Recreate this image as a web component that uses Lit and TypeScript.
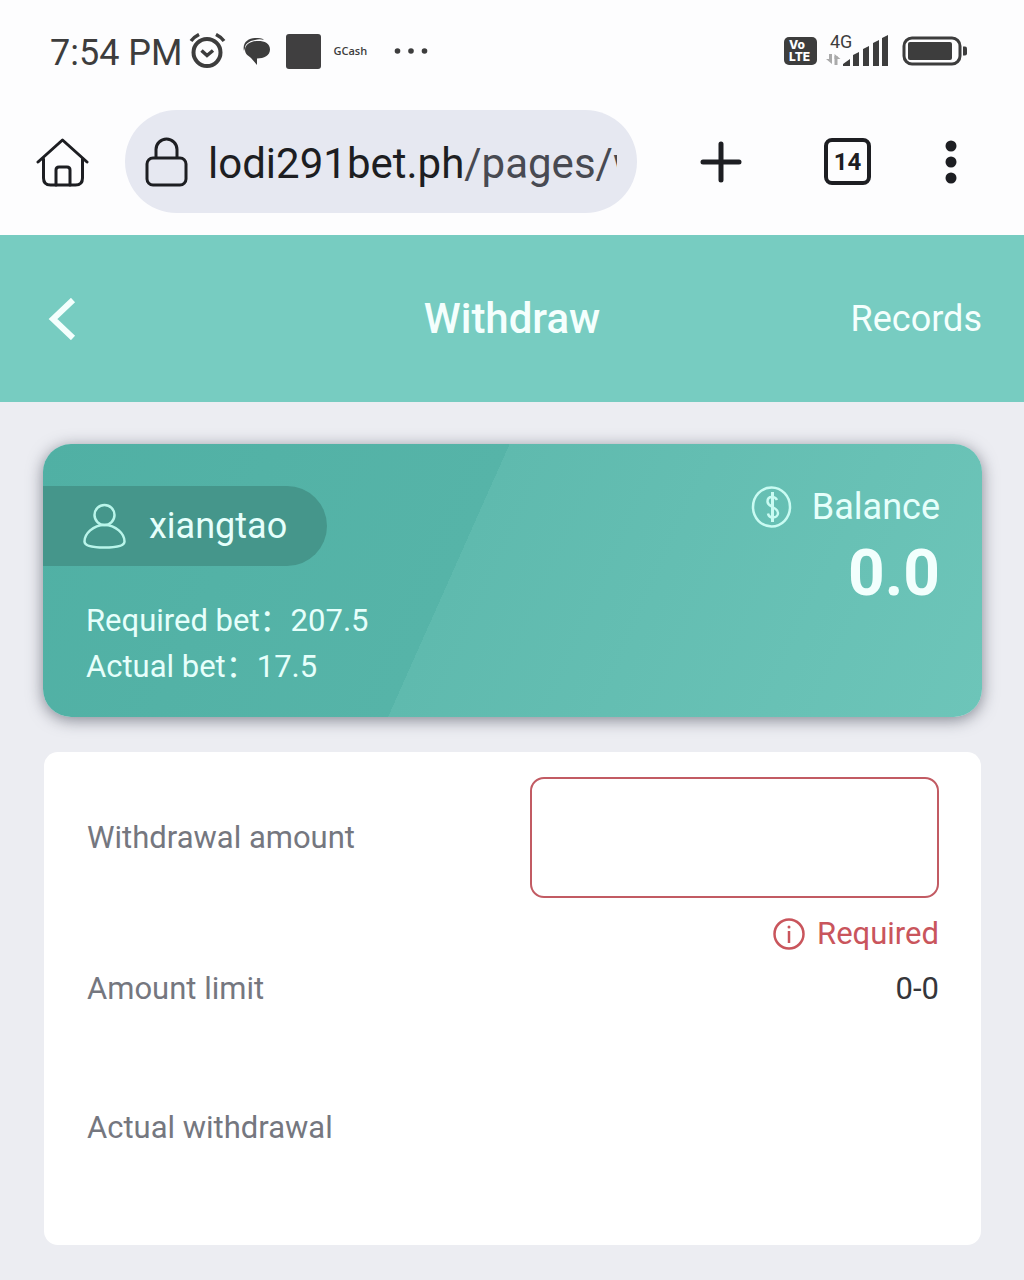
import { LitElement, html, css } from 'lit';
import { customElement, property } from 'lit/decorators.js';

@customElement('status-bar')
export class StatusBar extends LitElement {
  @property() time = '';

  static styles = css`
    :host {
      display: flex;
      align-items: center;
      justify-content: space-between;
      padding: 30px 56px 0 50px;
      color: #3d3d3d;
    }

    .group {
      display: flex;
      align-items: center;
      height: 42px;
    }

    .time {
      padding-top: 3px;
      font-size: 36px;
      line-height: 42px;
      margin-right: 6px;
      white-space: nowrap;
    }

    svg {
      display: block;
      flex: none;
    }

    .chat {
      margin-left: 17px;
    }

    .square {
      width: 35px;
      height: 35px;
      margin-left: 16px;
      border-radius: 3px;
      background: #403f40;
    }

    .app {
      margin-left: 13px;
      font: 600 11px/16px 'Open Sans', sans-serif;
    }

    .more {
      margin-left: 27px;
    }

    .volte {
      display: flex;
      flex-direction: column;
      justify-content: center;
      width: 33px;
      height: 28px;
      padding-left: 5px;
      box-sizing: border-box;
      border-radius: 5px;
      background: #3d3d3d;
      color: #fff;
      font: 800 12px/12px Inter, sans-serif;
    }

    .signal {
      position: relative;
      margin: 0 13px 0 9px;
    }

    .network {
      position: absolute;
      left: 4px;
      top: -3px;
      font-size: 18px;
      line-height: 20px;
    }
  `;

  render() {
    return html`
      <div class="group">
        <span class="time">${this.time}</span>
        <svg width="37" height="36" viewBox="0 0 37 36" fill="none" stroke="currentColor" stroke-width="4">
          <circle cx="18" cy="19.500" r="13.500" />
          <path d="M12.500 17.500l5.500 5 6-5" stroke-width="3.500" />
          <path d="M2 8q3-4 8-6.500M35 8q-3-4-8-6.500" stroke-width="3.500" />
        </svg>
        <svg class="chat" width="27" height="28" viewBox="0 0 27 28" fill="currentColor">
          <path d="M1 14C-1 6 5 1 12 1c4 0 7 0 9 2-3-1-6-1-9 0C6 4 2 7 2 11z" />
          <path d="M15 4C8 4 2 7.500 2 13c0 4.500 4 6 6 8l6 7v-6.500c7 0 13-3 13-9S22 4 15 4z" />
        </svg>
        <span class="square"></span>
        <span class="app">GCash</span>
        <svg class="more" width="35" height="6" viewBox="0 0 35 6" fill="currentColor">
          <circle cx="3.500" cy="3" r="2.800" />
          <circle cx="17" cy="3" r="2.800" />
          <circle cx="30.500" cy="3" r="2.800" />
        </svg>
      </div>
      <div class="group">
        <span class="volte"><span>Vo</span><span>LTE</span></span>
        <span class="signal">
          <span class="network">4G</span>
          <svg width="63" height="32" viewBox="0 0 63 32" fill="currentColor">
            <path d="M4.500 19v7M10 30v-9" stroke="#aaa" stroke-width="3" />
            <path d="M0 24h6v5zM8.500 21v-2l6 5h-6z" fill="#aaa" />
            <path d="M17 31v-2l7-5v7zM27 31V20l6-3v14zM37 31V14l6-3v20zM47 31V8l6-3v26zM56 31V3l6-3v31z" />
          </svg>
        </span>
        <svg width="66" height="30" viewBox="0 0 66 30">
          <rect x="2" y="2" width="56" height="26" rx="8" fill="none" stroke="currentColor" stroke-width="3" />
          <rect x="6" y="6" width="44" height="18" rx="2" fill="currentColor" />
          <path d="M61 10.500h2q2 0 2 2v5q0 2-2 2h-2z" fill="currentColor" />
        </svg>
      </div>
    `;
  }
}

@customElement('browser-bar')
export class BrowserBar extends LitElement {
  @property() domain = '';
  @property() path = '';
  @property({ type: Number }) tabs = 0;

  static styles = css`
    :host {
      display: flex;
      align-items: center;
      padding: 38px 66px 22px 36px;
      color: #1d1e22;
    }

    button {
      display: block;
      flex: none;
      margin: 0;
      padding: 0;
      border: 0;
      background: none;
      color: inherit;
      font: inherit;
    }

    svg {
      display: block;
      flex: none;
    }

    .address {
      display: flex;
      align-items: center;
      flex: 1;
      min-width: 0;
      height: 103px;
      margin: 0 63px 0 36px;
      padding: 0 20px;
      border-radius: 52px;
      background: #e6e8f1;
    }

    .url {
      flex: 1;
      min-width: 0;
      margin-left: 20px;
      padding-top: 4px;
      overflow: hidden;
      white-space: nowrap;
      text-align: left;
      font-size: 42px;
      line-height: 56px;
    }

    .path {
      color: #484a52;
    }

    .tabs {
      width: 47px;
      height: 47px;
      margin: 0 73px 0 82px;
      border: 4px solid #1d1e22;
      border-radius: 8px;
      font-size: 24px;
      line-height: 40px;
      font-weight: 700;
      text-align: center;
    }
  `;

  render() {
    return html`
      <button aria-label="Home">
        <svg width="53" height="50" viewBox="0 0 53 50" fill="none" stroke="currentColor"
             stroke-width="3" stroke-linecap="round" stroke-linejoin="round">
          <path d="M2 25L26.500 3 51 25" />
          <path d="M7.500 22v19q0 7 7 7h25q7 0 7-7V22" />
          <path d="M20 48V33q0-3 3-3h8q3 0 3 3v15" />
        </svg>
      </button>
      <button class="address" aria-label="Address">
        <svg width="43" height="50" viewBox="0 0 43 50" fill="none" stroke="currentColor" stroke-width="3">
          <rect x="2" y="21" width="39" height="27" rx="6" />
          <path d="M11 21v-8.500a10.500 10.500 0 0 1 21 0V21" />
        </svg>
        <span class="url">${this.domain}<span class="path">${this.path}</span></span>
      </button>
      <button aria-label="New tab">
        <svg width="42" height="42" viewBox="0 0 42 42" stroke="currentColor" stroke-width="5" stroke-linecap="round">
          <path d="M21 3v36M3 21h36" />
        </svg>
      </button>
      <button class="tabs" aria-label="Open tabs">${this.tabs}</button>
      <button aria-label="Menu">
        <svg width="14" height="44" viewBox="0 0 14 44" fill="currentColor">
          <circle cx="7" cy="6" r="5.500" />
          <circle cx="7" cy="22" r="5.500" />
          <circle cx="7" cy="38" r="5.500" />
        </svg>
      </button>
    `;
  }
}

@customElement('balance-card')
export class BalanceCard extends LitElement {
  @property() user = '';
  @property() balance = '';
  @property() required = '';
  @property() actual = '';

  static styles = css`
    :host {
      display: flex;
      justify-content: space-between;
      padding: 42px 42px 27px 0;
      border-radius: 28px;
      color: #e6fffb;
      background: linear-gradient(114deg, #50b0a4, #56b4a8 44%, #5fbaae 44%, #6dc5b9);
      box-shadow: 0 3px 16px rgba(60, 65, 80, 0.6);
    }

    .user {
      display: flex;
      align-items: center;
      gap: 23px;
      width: fit-content;
      height: 80px;
      box-sizing: border-box;
      padding: 0 40px;
      border-radius: 0 40px 40px 0;
      background: #45968b;
      font-size: 36px;
      line-height: 42px;
    }

    .bets {
      margin: 32px 0 0 43px;
      font-size: 31px;
      line-height: 46px;
    }

    .bets p {
      margin: 0;
    }

    .total {
      text-align: right;
    }

    .caption {
      display: flex;
      align-items: center;
      gap: 20px;
      font-size: 36px;
      line-height: 42px;
    }

    .amount {
      font-size: 64px;
      line-height: 92px;
      font-weight: 700;
      color: #f2fffd;
    }

    svg {
      display: block;
      flex: none;
    }
  `;

  render() {
    return html`
      <div>
        <div class="user">
          <svg width="43" height="46" viewBox="0 0 43 46" fill="none" stroke="#b9f5ea" stroke-width="2.500">
            <circle cx="21.500" cy="12" r="10" />
            <path d="M21.500 22C10 22 1.500 31 1.500 38.500c0 4 6 6 20 6s20-2 20-6C41.500 31 33 22 21.500 22z" />
          </svg>
          <span>${this.user}</span>
        </div>
        <div class="bets">
          <p>Required bet：${this.required}</p>
          <p>Actual bet：${this.actual}</p>
        </div>
      </div>
      <div class="total">
        <div class="caption">
          <svg width="41" height="42" viewBox="0 0 41 42" fill="none" stroke="#c9fbf2" stroke-width="2.500">
            <ellipse cx="20.500" cy="21" rx="18.500" ry="19.500" />
            <path d="M26 14c-1-2-3-3-5-3-3 0-4.500 2-4.500 4.500 0 3 2.500 4 5 5.500 3 1.500 5.500 3 5.500 6s-2.500 4.500-5 4.500-4.500-1.500-5-4" />
            <path d="M21.500 6v30" stroke-width="3" />
          </svg>
          <span>Balance</span>
        </div>
        <div class="amount">${this.balance}</div>
      </div>
    `;
  }
}

@customElement('withdraw-form')
export class WithdrawForm extends LitElement {
  @property() limit = '';
  @property() error = '';

  static styles = css`
    :host {
      display: block;
      padding: 25px 42px 97px 43px;
      border-radius: 14px;
      background: #fff;
      color: #75777f;
      font-size: 31px;
      line-height: 40px;
    }

    .row {
      display: flex;
      align-items: center;
      justify-content: space-between;
    }

    .row + .row {
      margin-top: 99px;
    }

    .field {
      width: 48%;
      height: 121px;
      box-sizing: border-box;
      padding: 0 20px;
      border: 2px solid #c25b63;
      border-radius: 14px;
      background: none;
      color: #303133;
      font: inherit;
      outline: none;
    }

    .error {
      display: flex;
      align-items: center;
      justify-content: flex-end;
      gap: 12px;
      margin: 16px 0 15px;
      color: #c9555c;
    }

    .value {
      color: #35363a;
    }

    svg {
      display: block;
    }
  `;

  render() {
    return html`
      <div class="row">
        <label for="amount">Withdrawal amount</label>
        <input id="amount" class="field" type="text" inputmode="decimal" aria-describedby="amount-error" />
      </div>
      <p id="amount-error" class="error">
        <svg width="32" height="32" viewBox="0 0 32 32" fill="none" stroke="currentColor">
          <circle cx="16" cy="16" r="14.500" stroke-width="2.500" />
          <path d="M16 13v12" stroke-width="2.500" />
          <circle cx="16" cy="9" r="1.500" fill="currentColor" stroke="none" />
        </svg>
        ${this.error}
      </p>
      <div class="row">
        <span>Amount limit</span>
        <span class="value">${this.limit}</span>
      </div>
      <div class="row">
        <span>Actual withdrawal</span>
        <span class="value"></span>
      </div>
    `;
  }
}

@customElement('app-root')
export class AppRoot extends LitElement {
  static styles = css`
    :host {
      display: block;
      min-height: 100vh;
      box-sizing: border-box;
      background: #ecedf2;
      font-family: Roboto, 'Noto Sans CJK SC', sans-serif;
    }

    .chrome {
      background: #fdfdfe;
    }

    .header {
      display: grid;
      grid-template-columns: 1fr auto 1fr;
      align-items: center;
      height: 167px;
      padding: 0 42px;
      background: #77ccc1;
      color: #f4fffd;
    }

    .back {
      justify-self: start;
      padding: 0 6px;
      border: 0;
      background: none;
      color: inherit;
    }

    .back svg {
      display: block;
    }

    h1 {
      margin: 0;
      font-size: 42px;
      line-height: 50px;
      font-weight: 500;
    }

    .records {
      justify-self: end;
      color: inherit;
      font-size: 36px;
      line-height: 42px;
      text-decoration: none;
    }

    main {
      display: flex;
      flex-direction: column;
      gap: 35px;
      padding: 42px 42px 35px 43px;
    }

    withdraw-form {
      margin: 0 1px;
    }
  `;

  render() {
    return html`
      <div class="chrome">
        <status-bar time="7:54 PM"></status-bar>
        <browser-bar domain="lodi291bet.ph" path="/pages/withdraw" tabs="14"></browser-bar>
      </div>
      <header class="header">
        <button class="back" aria-label="Back">
          <svg width="28" height="42" viewBox="0 0 28 42" fill="none" stroke="currentColor" stroke-width="6">
            <path d="M25 2L5 21l20 19" />
          </svg>
        </button>
        <h1>Withdraw</h1>
        <a class="records" href="#records">Records</a>
      </header>
      <main>
        <balance-card user="xiangtao" balance="0.0" required="207.5" actual="17.5"></balance-card>
        <withdraw-form limit="0-0" error="Required"></withdraw-form>
      </main>
    `;
  }
}
